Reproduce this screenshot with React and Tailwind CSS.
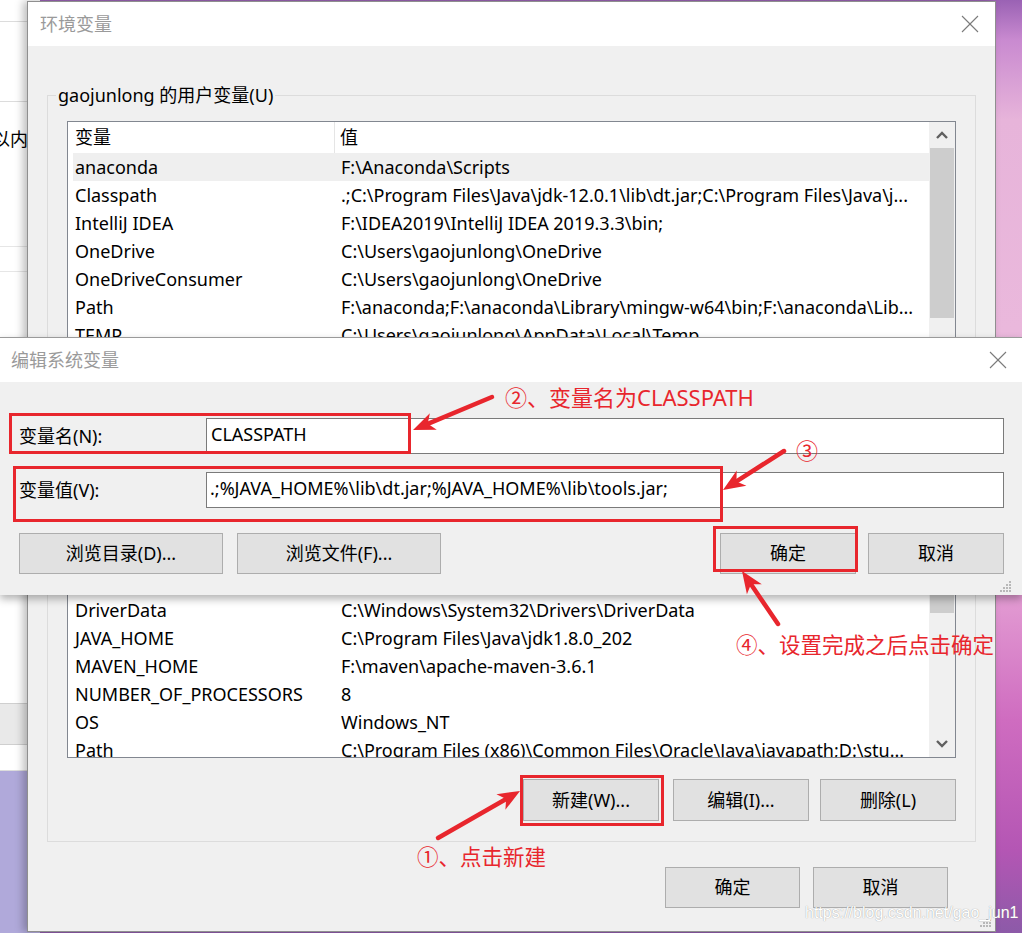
import React from "react";

const RED = "#e8262d";

function Btn({ children, w = "w-[136px]", h = "h-[42px]" }) {
  return (
    <div className={`${w} ${h} flex items-center justify-center bg-[#e1e1e1] border border-[#adadad] text-[18px] text-black`}>
      {children}
    </div>
  );
}

function CloseX() {
  return (
    <svg width="18" height="18" viewBox="0 0 18 18">
      <line x1="1" y1="1" x2="17" y2="17" stroke="#7a7a7a" strokeWidth="1.1" />
      <line x1="17" y1="1" x2="1" y2="17" stroke="#7a7a7a" strokeWidth="1.1" />
    </svg>
  );
}

function Chevron({ up }) {
  return (
    <svg width="14" height="10" viewBox="0 0 14 10">
      <polyline
        points={up ? "2,8 7,3 12,8" : "2,2 7,7 12,2"}
        fill="none"
        stroke="#606060"
        strokeWidth="2.4"
      />
    </svg>
  );
}

function Grip() {
  const dots = [
    [9, 0],
    [6, 3],
    [9, 3],
    [3, 6],
    [6, 6],
    [9, 6],
    [0, 9],
    [3, 9],
    [6, 9],
    [9, 9],
  ];
  return (
    <svg width="12" height="12" viewBox="0 0 12 12">
      {dots.map(([x, y], i) => (
        <rect key={i} x={x} y={y} width="2" height="2" fill="#b8b8b8" />
      ))}
    </svg>
  );
}

function Row({ name, value, selected }) {
  return (
    <div className={`h-[28px] ml-[5px] flex items-center whitespace-nowrap ${selected ? "bg-[#efefef]" : ""}`}>
      <div className="w-[262px] pl-[2px] overflow-hidden">{name}</div>
      <div className="pl-[6px] overflow-hidden">{value}</div>
    </div>
  );
}

function Header() {
  return (
    <div className="h-[31px] flex items-center whitespace-nowrap">
      <div className="w-[267px] h-full pl-[7px] flex items-center border-r border-[#e5e5e5]">变量</div>
      <div className="pl-[5px]">值</div>
    </div>
  );
}

const userRows = [
  ["anaconda", "F:\\Anaconda\\Scripts", true],
  ["Classpath", ".;C:\\Program Files\\Java\\jdk-12.0.1\\lib\\dt.jar;C:\\Program Files\\Java\\j..."],
  ["IntelliJ IDEA", "F:\\IDEA2019\\IntelliJ IDEA 2019.3.3\\bin;"],
  ["OneDrive", "C:\\Users\\gaojunlong\\OneDrive"],
  ["OneDriveConsumer", "C:\\Users\\gaojunlong\\OneDrive"],
  ["Path", "F:\\anaconda;F:\\anaconda\\Library\\mingw-w64\\bin;F:\\anaconda\\Lib..."],
  ["TEMP", "C:\\Users\\gaojunlong\\AppData\\Local\\Temp"],
];

const sysRows = [
  ["ComSpec", "C:\\WINDOWS\\system32\\cmd.exe"],
  ["configsetroot", "C:\\WINDOWS\\ConfigSetRoot"],
  ["DriverData", "C:\\Windows\\System32\\Drivers\\DriverData"],
  ["JAVA_HOME", "C:\\Program Files\\Java\\jdk1.8.0_202"],
  ["MAVEN_HOME", "F:\\maven\\apache-maven-3.6.1"],
  ["NUMBER_OF_PROCESSORS", "8"],
  ["OS", "Windows_NT"],
  ["Path", "C:\\Program Files (x86)\\Common Files\\Oracle\\Java\\javapath;D:\\stu..."],
];

function Arrow({ x1, y1, x2, y2 }) {
  const dx = x2 - x1;
  const dy = y2 - y1;
  const L = Math.hypot(dx, dy);
  const ux = dx / L;
  const uy = dy / L;
  const px = -uy;
  const py = ux;
  const hl = 22;
  const hw = 9;
  const bx = x2 - ux * hl;
  const by = y2 - uy * hl;
  return (
    <g>
      <line x1={x1} y1={y1} x2={bx + ux * 6} y2={by + uy * 6} stroke={RED} strokeWidth="4.5" strokeLinecap="round" />
      <polygon
        points={`${x2},${y2} ${bx + px * hw},${by + py * hw} ${bx + ux * 6},${by + uy * 6} ${bx - px * hw},${by - py * hw}`}
        fill={RED}
      />
    </g>
  );
}

export default function App() {
  return (
    <div className="relative w-[1022px] h-[933px] overflow-hidden bg-[linear-gradient(180deg,#9a62b4_0px,#c98ad0_40px,#e7b4da_120px,#eab8dc_330px,#e29ad2_600px,#cf6cc0_720px,#b456b4_850px,#8c5aa8_933px)] font-['Noto_Sans','Noto_Sans_CJK_SC',sans-serif] text-[18px] text-black">
      {/* lower-left desktop */}
      <div className="absolute left-0 top-[771px] w-[40px] h-[162px] bg-[#b0a9da]" />

      {/* background window on the left */}
      <div className="absolute left-0 top-0 w-[40px] h-[771px] bg-white flex flex-col overflow-hidden">
        <div className="h-[22px] border-b border-[#dcdcdc]" />
        <div className="h-[80px] border-b border-[#dcdcdc]" />
        <div className="h-[145px] border-b border-[#e6e6e6] pt-[24px] -ml-[8px] whitespace-nowrap">以内</div>
        <div className="h-[25px] border-b border-[#e6e6e6]" />
        <div className="h-[431px]" />
        <div className="h-[42px] bg-[#e9e9e9] border-y border-[#cfcfcf]" />
        <div className="flex-1 border-b border-[#dcdcdc]" />
      </div>

      {/* main dialog: 环境变量 */}
      <div className="absolute left-[27px] top-[1px] w-[969px] h-[931px] border border-[#8f8f8f] bg-[#f0f0f0] flex flex-col shadow-[-4px_0_8px_rgba(0,0,0,0.25)]">
        <div className="h-[44px] bg-white flex items-center justify-between pl-[12px] pr-[16px]">
          <span className="text-[#9a9a9a]">环境变量</span>
          <CloseX />
        </div>
        <div className="px-[19px] flex flex-col">
          {/* user group */}
          <fieldset className="mt-[37px] border border-[#dcdcdc] pb-[20px]">
            <legend className="ml-[8px] px-[2px] leading-[24px]">gaojunlong 的用户变量(U)</legend>
            <div className="mx-[19px] mt-[14px] h-[223px] border border-[#828790] bg-white flex overflow-hidden">
              <div className="flex-1 min-w-0 overflow-hidden">
                <Header />
                {userRows.map(([n, v, s]) => (
                  <Row key={n} name={n} value={v} selected={s} />
                ))}
              </div>
              <div className="w-[26px] bg-[#f0f0f0] flex flex-col">
                <div className="h-[26px] flex items-center justify-center">
                  <Chevron up />
                </div>
                <div className="mx-[1px] h-[170px] bg-[#cdcdcd]" />
              </div>
            </div>
            <div className="mx-[19px] mt-[21px] flex justify-end gap-[12px]">
              <Btn>新建(N)...</Btn>
              <Btn>编辑(E)...</Btn>
              <Btn>删除(D)</Btn>
            </div>
          </fieldset>

          {/* system group */}
          <fieldset className="mt-[42px] border border-[#dcdcdc] pb-[20px]">
            <legend className="ml-[8px] px-[2px] leading-[24px]">系统变量(S)</legend>
            <div className="mx-[19px] mt-[14px] h-[250px] border border-[#828790] bg-white flex overflow-hidden">
              <div className="flex-1 min-w-0 overflow-hidden">
                <Header />
                {sysRows.map(([n, v]) => (
                  <Row key={n + v} name={n} value={v} />
                ))}
              </div>
              <div className="w-[26px] bg-[#f0f0f0] flex flex-col">
                <div className="h-[26px] flex items-center justify-center">
                  <Chevron up />
                </div>
                <div className="mx-[1px] h-[78px] bg-[#cdcdcd]" />
                <div className="flex-1" />
                <div className="h-[26px] flex items-center justify-center">
                  <Chevron />
                </div>
              </div>
            </div>
            <div className="mx-[19px] mt-[21px] flex justify-end">
              <Btn>新建(W)...</Btn>
              <div className="w-[14px]" />
              <Btn>编辑(I)...</Btn>
              <div className="w-[11px]" />
              <Btn>删除(L)</Btn>
            </div>
          </fieldset>

          <div className="mt-[25px] flex justify-end gap-[13px] pr-[28px]">
            <Btn w="w-[135px]" h="h-[41px]">确定</Btn>
            <Btn w="w-[135px]" h="h-[41px]">取消</Btn>
          </div>
        </div>
        <div className="flex-1 flex items-end justify-end pr-[3px] pb-[3px]">
          <Grip />
        </div>
      </div>

      {/* edit dialog: 编辑系统变量 */}
      <div className="absolute left-0 top-[337px] w-[1022px] h-[258px] border-t border-[#9a9a9a] bg-[#f0f0f0] flex flex-col shadow-[0_4px_8px_rgba(0,0,0,0.3)]">
        <div className="h-[44px] bg-white flex items-center justify-between pl-[11px] pr-[15px]">
          <span className="text-[#9a9a9a]">编辑系统变量</span>
          <CloseX />
        </div>
        <div className="pl-[19px] pr-[18px] flex flex-col">
          <div className="mt-[36px] flex items-center">
            <div className="w-[187px]">变量名(N):</div>
            <div className="flex-1 h-[36px] bg-white border border-[#7a7a7a] flex items-center pl-[4px] pb-[4px]">CLASSPATH</div>
          </div>
          <div className="mt-[18px] flex items-center">
            <div className="w-[187px]">变量值(V):</div>
            <div className="flex-1 h-[36px] bg-white border border-[#7a7a7a] flex items-center pl-[3px] pb-[3px]">
              .;%JAVA_HOME%\lib\dt.jar;%JAVA_HOME%\lib\tools.jar;
            </div>
          </div>
          <div className="mt-[25px] flex items-center">
            <Btn w="w-[204px]" h="h-[41px]">浏览目录(D)...</Btn>
            <div className="w-[14px]" />
            <Btn w="w-[204px]" h="h-[41px]">浏览文件(F)...</Btn>
            <div className="flex-1" />
            <Btn w="w-[136px]" h="h-[41px]">确定</Btn>
            <div className="w-[12px]" />
            <Btn w="w-[136px]" h="h-[41px]">取消</Btn>
          </div>
        </div>
        <div className="flex-1 flex items-end justify-end pr-[10px] pb-[2px]">
          <Grip />
        </div>
      </div>

      {/* annotations */}
      <svg className="absolute left-0 top-0 pointer-events-none" width="1022" height="933" viewBox="0 0 1022 933">
        <rect x="10.5" y="414.5" width="399" height="38" fill="none" stroke={RED} strokeWidth="3" />
        <rect x="14.5" y="467.5" width="707" height="53" fill="none" stroke={RED} strokeWidth="3" />
        <rect x="714.5" y="527.5" width="142" height="43" fill="none" stroke={RED} strokeWidth="3" />
        <rect x="521.5" y="776.5" width="141" height="48" fill="none" stroke={RED} strokeWidth="3" />
        <Arrow x1={492} y1={397} x2={413} y2={430} />
        <Arrow x1={784} y1={451} x2={723} y2={490} />
        <Arrow x1={778} y1={624} x2={742} y2={571} />
        <Arrow x1={438} y1={838} x2={520} y2={791} />
      </svg>
      <div className="absolute left-[505px] top-[383px] text-[22px] leading-[28px] text-[#e8262d] whitespace-nowrap">②、变量名为CLASSPATH</div>
      <div className="absolute left-[796px] top-[436px] text-[22px] leading-[28px] text-[#e8262d]">③</div>
      <div className="absolute left-[736px] top-[631px] text-[21.5px] leading-[28px] text-[#e8262d] whitespace-nowrap">④、设置完成之后点击确定</div>
      <div className="absolute left-[417px] top-[843px] text-[21.5px] leading-[28px] text-[#e8262d] whitespace-nowrap">①、点击新建</div>
      <div className="absolute left-[805px] top-[902px] text-[16px] leading-[22px] text-white whitespace-nowrap font-['Liberation_Sans',sans-serif] [text-shadow:0_0_1px_#8a8a8a]">
        https://blog.csdn.net/gao_jun1
      </div>
    </div>
  );
}
